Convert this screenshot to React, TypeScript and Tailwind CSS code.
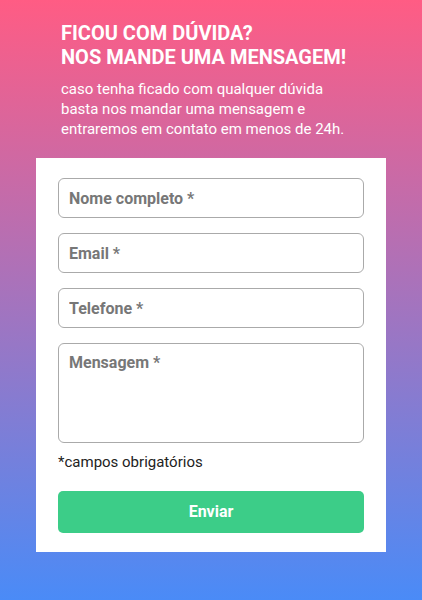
import React from 'react';

const fields = ['Nome completo *', 'Email *', 'Telefone *'];

const ContactForm: React.FC = () => {
  return (
    <div className="bg-white w-[350px] mx-auto px-[22px] pt-[20px] pb-[19px]">
      <form className="flex flex-col" onSubmit={(e) => e.preventDefault()}>
        <div className="flex flex-col gap-[15px]">
          {fields.map((label) => (
            <input
              key={label}
              type="text"
              placeholder={label}
              className="h-[40px] w-full rounded-[6px] border border-[#aaaaaa] px-[10px] text-[16px] font-bold text-[#444] placeholder:text-[#777777] outline-none"
            />
          ))}
          <textarea
            placeholder="Mensagem *"
            className="h-[100px] w-full resize-none rounded-[6px] border border-[#aaaaaa] px-[10px] py-[7px] text-[16px] font-bold text-[#444] placeholder:text-[#777777] outline-none"
          />
        </div>
        <p className="mt-[9px] text-[15px] leading-[20px] text-[#222]">*campos obrigatórios</p>
        <button
          type="submit"
          className="mt-[19px] h-[42px] w-full rounded-[5px] bg-[#3ccd88] text-[16px] font-bold text-white"
        >
          Enviar
        </button>
      </form>
    </div>
  );
}

export default function App() {
  return (
    <div
      className="min-h-[600px] w-full bg-linear-to-b/srgb from-[#ff5c84] to-[#4a8bf7] pt-[21px] pb-[44px]"
      style={{ fontFamily: 'Roboto, "Liberation Sans", sans-serif' }}
    >
      <div className="w-[350px] mx-auto">
        <div className="px-[25px] text-white">
          <h2 className="text-[20px] leading-[24px] font-bold uppercase">
            Ficou com dúvida?
            <br />
            Nos mande uma mensagem!
          </h2>
          <p className="mt-[10px] text-[15px] leading-[20px]">
            caso tenha ficado com qualquer dúvida basta nos mandar uma mensagem e entraremos em contato em menos de
            24h.
          </p>
        </div>
      </div>
      <div className="mt-[19px]">
        <ContactForm />
      </div>
    </div>
  );
}
